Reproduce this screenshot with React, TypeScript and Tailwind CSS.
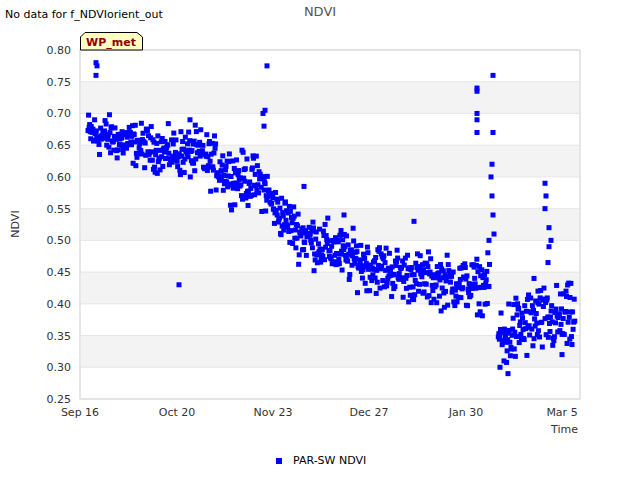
import React from 'react';

// plot geometry (svg coords, svg starts at page y=20)
const X0 = 80, X1 = 580, YT = 30, YB = 379;
const yOf = (v: number) => YB - ((v - 0.25) / 0.55) * (YB - YT);

// seeded rng so the scatter is stable
const rng = (() => {
  let s = 12345;
  return () => {
    s = (s * 1103515245 + 12345) & 0x7fffffff;
    return s / 0x7fffffff;
  };
})();

// trend: [x, center, spread]
const trend: [number, number, number][] = [
  [88, 0.67, 0.025], [165, 0.64, 0.025], [200, 0.635, 0.03], [235, 0.6, 0.03],
  [262, 0.59, 0.03], [275, 0.55, 0.025], [300, 0.51, 0.03], [340, 0.48, 0.03],
  [370, 0.46, 0.03], [420, 0.44, 0.03], [470, 0.43, 0.03], [490, 0.43, 0.03],
  [500, 0.345, 0.045], [530, 0.37, 0.04], [575, 0.375, 0.04],
];

const at = (x: number) => {
  for (let i = 0; i < trend.length - 1; i++) {
    const [xa, ca, sa] = trend[i];
    const [xb, cb, sb] = trend[i + 1];
    if (x >= xa && x <= xb) {
      const t = (x - xa) / (xb - xa);
      return [ca + (cb - ca) * t, sa + (sb - sa) * t];
    }
  }
  return [0.4, 0.03];
};

const points: [number, number][] = [];
for (let x = 88; x <= 575; x += 0.55) {
  if (x > 490 && x < 498) continue;
  const [c, s] = at(x);
  const v = c + (rng() + rng() + rng() - 1.5) * s * 1.3;
  points.push([x, v]);
}
const outliers: [number, number][] = [
  [96, 0.78], [97, 0.775], [96, 0.76], [179, 0.43], [190, 0.69], [267, 0.775],
  [265, 0.705], [263, 0.7], [264, 0.68], [304, 0.585], [344, 0.54], [414, 0.53],
  [477, 0.74], [477, 0.735], [477, 0.7], [477, 0.69], [477, 0.67], [493, 0.76],
  [493, 0.67], [492, 0.62], [491, 0.6], [492, 0.57], [493, 0.54], [494, 0.51],
  [489, 0.5], [545, 0.59], [546, 0.57], [545, 0.55], [549, 0.52], [549, 0.49],
  [551, 0.5], [548, 0.465], [562, 0.32], [500, 0.3], [508, 0.29], [504, 0.31],
  [534, 0.44], [538, 0.42], [566, 0.42], [570, 0.41],
];

const yTicks = [0.8, 0.75, 0.7, 0.65, 0.6, 0.55, 0.5, 0.45, 0.4, 0.35, 0.3, 0.25];
const xTicks: [number, string][] = [
  [80, 'Sep 16'], [177, 'Oct 20'], [273, 'Nov 23'], [369, 'Dec 27'], [466, 'Jan 30'], [562, 'Mar 5'],
];
const bands = [0.75, 0.65, 0.55, 0.45, 0.35];

export default function App() {
  return (
    <div className="w-[640px] h-[480px] bg-white text-[11px] text-[#333]" style={{ fontFamily: '"DejaVu Sans", sans-serif' }}>
      <div className="relative h-[20px]">
        <span className="absolute left-[5px] top-[7px] text-black">No data for f_NDVIorient_out</span>
        <span className="absolute left-0 right-0 top-[2px] text-center text-[13px] text-[#555]">NDVI</span>
      </div>
      <svg width="640" height="420" className="block" fontFamily='"DejaVu Sans", sans-serif' fontSize="11">
        <rect x={X0} y={YT} width={X1 - X0} height={YB - YT} fill="#fff" stroke="#ddd" />
        {bands.map((b) => (
          <rect key={b} x={X0 + 0.5} y={yOf(b)} width={X1 - X0 - 1} height={yOf(b - 0.05) - yOf(b)} fill="#f3f3f3" />
        ))}
        {yTicks.map((t) => (
          <g key={t}>
            <line x1={X0} x2={X1} y1={yOf(t)} y2={yOf(t)} stroke="#e6e6e6" />
            <text x={71} y={yOf(t) + 4} textAnchor="end" fill="#333">{t.toFixed(2)}</text>
          </g>
        ))}
        <rect x={X0} y={YT} width={X1 - X0} height={YB - YT} fill="none" stroke="#ddd" />
        {xTicks.map(([x, l]) => (
          <text key={l} x={x} y={396} textAnchor="middle" fill="#333">{l}</text>
        ))}
        <text x={578} y={413} textAnchor="end" fill="#333">Time</text>
        <text x={0} y={0} transform="translate(19,204) rotate(-90)" textAnchor="middle" fill="#333">NDVI</text>
        {[...points, ...outliers].map(([x, v], i) => (
          <rect key={i} x={x - 2.5} y={yOf(v) - 2.5} width={5} height={5} fill="#0000ff" />
        ))}
        <polygon points="80.5,30 80.5,17 85,12.5 137,12.5 142.5,17 142.5,30" fill="#ffffc4" stroke="#000" />
        <text x={111} y={26} textAnchor="middle" fontWeight="bold" fontSize="11" fill="#8b0000">WP_met</text>
      </svg>
      <div className="flex items-center gap-[11px] mt-[13px] pl-[276px]">
        <span className="w-[6px] h-[6px] bg-[#0000ff]" />
        <span className="text-black">PAR-SW NDVI</span>
      </div>
    </div>
  );
}
